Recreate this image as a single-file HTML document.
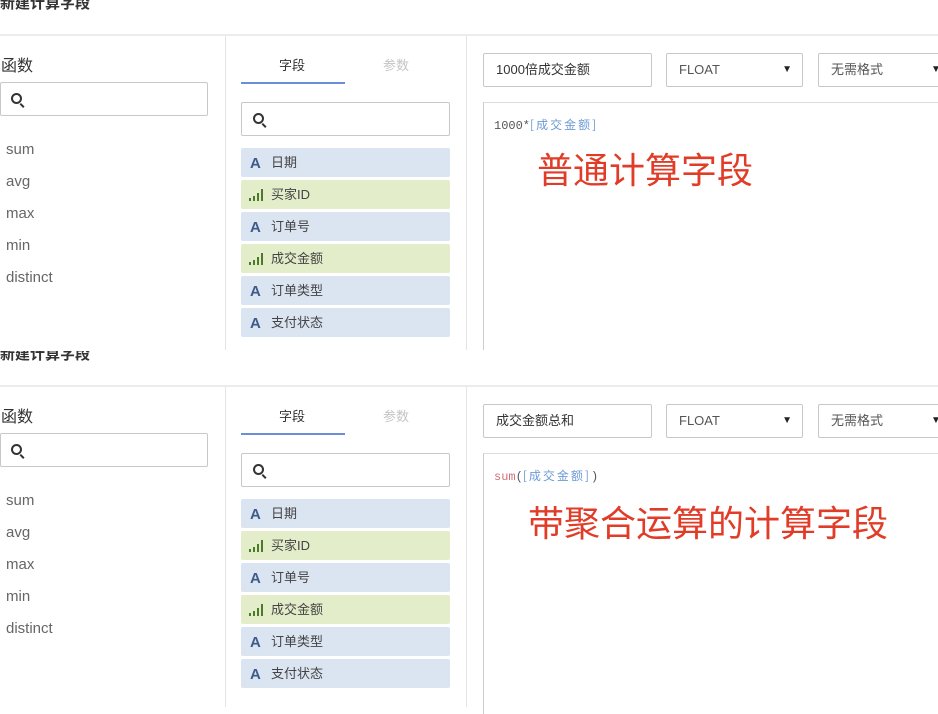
<!DOCTYPE html>
<html><head><meta charset="utf-8"><style>
*{margin:0;padding:0;box-sizing:border-box}
html,body{width:938px;height:714px;overflow:hidden}
body{background:#fff;font-family:"Liberation Sans","Noto Sans CJK SC",sans-serif;position:relative}
.p{position:absolute;left:0;width:938px;background:#fff;overflow:hidden}
.a{position:absolute}
.title{left:0;top:-8px;font-size:15px;font-weight:bold;color:#333}
.hl{left:0;top:34px;width:938px;height:2px;background:#ececec}
.v{width:1px;top:36px;height:320px;background:#e4e4e4}
.h2{left:1px;top:52px;font-size:16px;color:#333}
.box{border:1px solid #c8c8c8;border-radius:2px;background:#fff}
.q{position:absolute;width:11px;height:11px;border:2px solid #333;border-radius:50%}
.q:after{content:"";position:absolute;left:8px;top:8px;width:5px;height:2px;background:#333;transform:rotate(45deg);transform-origin:0 0}
.fn{left:6px;font-size:15px;color:#666}
.it{left:241px;width:209px;height:29px;border-radius:2px;font-size:13px;color:#444;line-height:29px;padding-left:30px}
.b{background:#dbe4f1}.g{background:#e3edc9}
.ia{position:absolute;left:9px;top:1px;font-weight:bold;font-size:15px;color:#3d5b8c;font-family:"Liberation Sans",sans-serif}
.bars{position:absolute;left:8px;top:9px;width:16px;height:12px}
.bars i{position:absolute;bottom:0;width:2px;background:#4a7a2a}
.inp{height:34px;font-size:13px;color:#333;line-height:32px;padding-left:12px}
.red{font-size:36px;color:#e03c28;font-family:"Noto Sans CJK SC",sans-serif;white-space:nowrap;line-height:40px}
.code{left:494px;top:116px;font-family:"Liberation Mono",monospace;font-size:12px;color:#555}
.code span{color:#6b9ad6;letter-spacing:2px;font-family:"Noto Sans CJK SC",sans-serif}
</style></head><body>

<div class="p" style="top:0;height:350px">
<div class="a title">新建计算字段</div>
<div class="a hl"></div>
<div class="a v" style="left:225px"></div>
<div class="a v" style="left:466px"></div>
<div class="a h2">函数</div>
<div class="a box" style="left:0;top:82px;width:208px;height:34px"><div class="q" style="left:10px;top:10px"></div></div>
<div class="a fn" style="top:141px">sum</div>
<div class="a fn" style="top:173px">avg</div>
<div class="a fn" style="top:205px">max</div>
<div class="a fn" style="top:237px">min</div>
<div class="a fn" style="top:269px">distinct</div>
<div class="a" style="left:279px;top:55px;font-size:13px;color:#333">字段</div>
<div class="a" style="left:383px;top:55px;font-size:13px;color:#c4c4c4">参数</div>
<div class="a" style="left:241px;top:82px;width:104px;height:2px;background:#6a8fd8"></div>
<div class="a box" style="left:241px;top:102px;width:209px;height:34px"><div class="q" style="left:11px;top:10px"></div></div>
<div class="a it b" style="top:148px"><span class="ia">A</span>日期</div>
<div class="a it g" style="top:180px"><span class="bars"><i style="left:0;height:3px"></i><i style="left:4px;height:5px"></i><i style="left:8px;height:8px"></i><i style="left:12px;height:12px"></i></span>买家ID</div>
<div class="a it b" style="top:212px"><span class="ia">A</span>订单号</div>
<div class="a it g" style="top:244px"><span class="bars"><i style="left:0;height:3px"></i><i style="left:4px;height:5px"></i><i style="left:8px;height:8px"></i><i style="left:12px;height:12px"></i></span>成交金额</div>
<div class="a it b" style="top:276px"><span class="ia">A</span>订单类型</div>
<div class="a it b" style="top:308px"><span class="ia">A</span>支付状态</div>
<div class="a box inp" style="left:483px;top:53px;width:169px">1000倍成交金额</div>
<div class="a box inp" style="left:666px;top:53px;width:137px;color:#555">FLOAT<span style="position:absolute;right:10px;font-size:10px;color:#222">▼</span></div>
<div class="a box inp" style="left:818px;top:53px;width:130px;color:#555">无需格式<span style="position:absolute;left:112px;font-size:10px;color:#222">▼</span></div>
<div class="a" style="left:483px;top:102px;width:460px;height:260px;border-left:1px solid #ccc;border-top:1px solid #ddd"></div>
<div class="a code">1000*<span>[成交金额]</span></div>
<div class="a red" style="left:537px;top:148px">普通计算字段</div>
</div>

<div class="p" style="top:351px;height:363px">
<div class="a title">新建计算字段</div>
<div class="a hl"></div>
<div class="a v" style="left:225px"></div>
<div class="a v" style="left:466px"></div>
<div class="a h2">函数</div>
<div class="a box" style="left:0;top:82px;width:208px;height:34px"><div class="q" style="left:10px;top:10px"></div></div>
<div class="a fn" style="top:141px">sum</div>
<div class="a fn" style="top:173px">avg</div>
<div class="a fn" style="top:205px">max</div>
<div class="a fn" style="top:237px">min</div>
<div class="a fn" style="top:269px">distinct</div>
<div class="a" style="left:279px;top:55px;font-size:13px;color:#333">字段</div>
<div class="a" style="left:383px;top:55px;font-size:13px;color:#c4c4c4">参数</div>
<div class="a" style="left:241px;top:82px;width:104px;height:2px;background:#6a8fd8"></div>
<div class="a box" style="left:241px;top:102px;width:209px;height:34px"><div class="q" style="left:11px;top:10px"></div></div>
<div class="a it b" style="top:148px"><span class="ia">A</span>日期</div>
<div class="a it g" style="top:180px"><span class="bars"><i style="left:0;height:3px"></i><i style="left:4px;height:5px"></i><i style="left:8px;height:8px"></i><i style="left:12px;height:12px"></i></span>买家ID</div>
<div class="a it b" style="top:212px"><span class="ia">A</span>订单号</div>
<div class="a it g" style="top:244px"><span class="bars"><i style="left:0;height:3px"></i><i style="left:4px;height:5px"></i><i style="left:8px;height:8px"></i><i style="left:12px;height:12px"></i></span>成交金额</div>
<div class="a it b" style="top:276px"><span class="ia">A</span>订单类型</div>
<div class="a it b" style="top:308px"><span class="ia">A</span>支付状态</div>
<div class="a box inp" style="left:483px;top:53px;width:169px">成交金额总和</div>
<div class="a box inp" style="left:666px;top:53px;width:137px;color:#555">FLOAT<span style="position:absolute;right:10px;font-size:10px;color:#222">▼</span></div>
<div class="a box inp" style="left:818px;top:53px;width:130px;color:#555">无需格式<span style="position:absolute;left:112px;font-size:10px;color:#222">▼</span></div>
<div class="a" style="left:483px;top:102px;width:460px;height:261px;border-left:1px solid #ccc;border-top:1px solid #ddd"></div>
<div class="a code"><b style="font-weight:normal;color:#d0707a">sum</b>(<span>[成交金额]</span>)</div>
<div class="a red" style="left:528px;top:150px">带聚合运算的计算字段</div>
</div>
</body></html>
